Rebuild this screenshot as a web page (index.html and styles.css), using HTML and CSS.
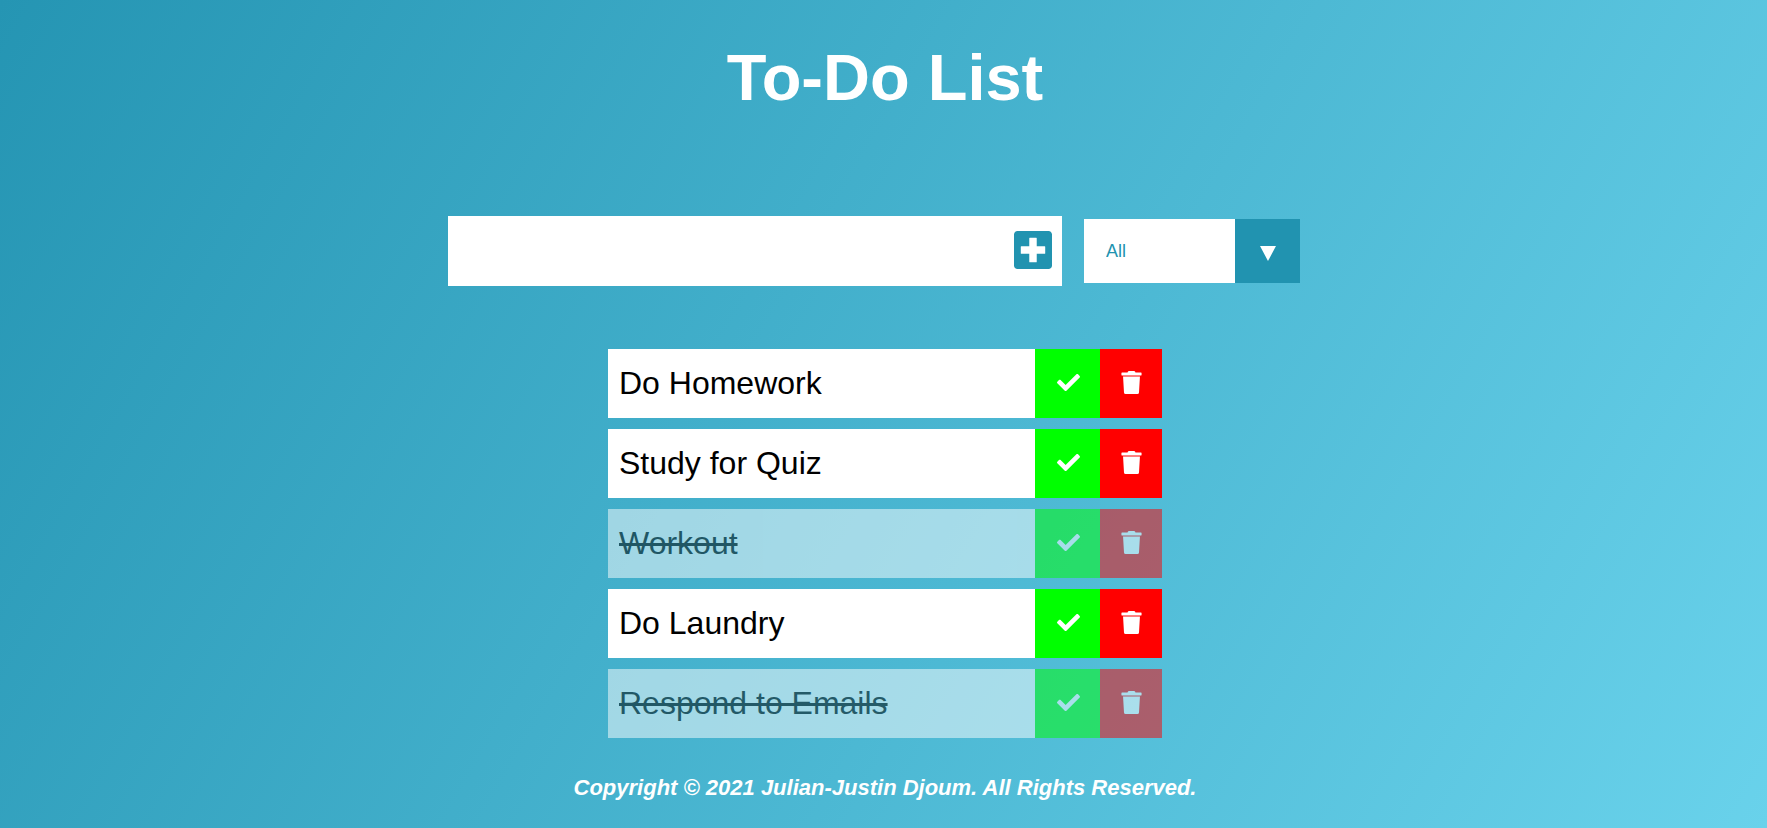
FILE: index.html
```html
<!DOCTYPE html>
<html lang="en">
<head>
<meta charset="utf-8">
<meta name="viewport" content="width=device-width, initial-scale=1">
<title>To-Do List</title>
<link rel="stylesheet" href="styles.css">
</head>
<body>
<svg class="sprite" aria-hidden="true">
  <symbol id="check" viewBox="0 0 512 512"><path d="M173.898 439.404l-166.400-166.400c-9.997-9.997-9.997-26.206 0-36.204l36.203-36.204c9.997-9.998 26.207-9.998 36.204 0L192 312.690 432.095 72.596c9.997-9.997 26.207-9.997 36.204 0l36.203 36.204c9.997 9.997 9.997 26.206 0 36.204l-294.400 294.401c-9.998 9.997-26.207 9.997-36.204-.001z"/></symbol>
  <symbol id="trash" viewBox="0 0 448 512"><path d="M438 32H312l-9.400-18.700A24 24 0 0 0 281.100 0H166.800a23.720 23.720 0 0 0-21.400 13.300L136 32H10A10 10 0 0 0 0 42v46a10 10 0 0 0 10 10h428a10 10 0 0 0 10-10V42a10 10 0 0 0-10-10zM57 478a36 36 0 0 0 36 34h262a36 36 0 0 0 36-34L412 122H36z"/></symbol>
  <symbol id="plus" viewBox="0 0 448 448"><path d="M406 0H42C18 0 0 18 0 42v364c0 24 18 42 42 42h364c24 0 42-18 42-42V42c0-24-18-42-42-42zm-38 262c0 4-2 6-6 6h-94v94c0 4-2 6-6 6h-76c-4 0-6-2-6-6v-94H86c-4 0-6-2-6-6v-76c0-4 2-6 6-6h94V86c0-4 2-6 6-6h76c4 0 6 2 6 6v94h94c4 0 6 2 6 6v76z"/></symbol>
</svg>
<header class="header"><h1>To-Do List</h1></header>
<main>
  <form class="form">
    <div class="entry">
      <input class="entry-input" type="text" aria-label="New task">
      <button class="entry-button" type="button" aria-label="Add task"><svg><use href="#plus"/></svg></button>
    </div>
    <div class="filter">
      <select class="filter-select" aria-label="Filter tasks">
        <option>All</option><option>Completed</option><option>Incomplete</option>
      </select>
      <span class="filter-arrow" aria-hidden="true"><svg viewBox="0 0 16 15"><path d="M0 0h16L8 15z"/></svg></span>
    </div>
  </form>
  <ul class="list">
    <li class="todo"><span class="todo-text">Do Homework</span><button class="done" type="button" aria-label="Complete"><svg><use href="#check"/></svg></button><button class="remove" type="button" aria-label="Delete"><svg><use href="#trash"/></svg></button></li>
    <li class="todo"><span class="todo-text">Study for Quiz</span><button class="done" type="button" aria-label="Complete"><svg><use href="#check"/></svg></button><button class="remove" type="button" aria-label="Delete"><svg><use href="#trash"/></svg></button></li>
    <li class="todo completed"><span class="todo-text">Workout</span><button class="done" type="button" aria-label="Complete"><svg><use href="#check"/></svg></button><button class="remove" type="button" aria-label="Delete"><svg><use href="#trash"/></svg></button></li>
    <li class="todo"><span class="todo-text">Do Laundry</span><button class="done" type="button" aria-label="Complete"><svg><use href="#check"/></svg></button><button class="remove" type="button" aria-label="Delete"><svg><use href="#trash"/></svg></button></li>
    <li class="todo completed"><span class="todo-text">Respond to Emails</span><button class="done" type="button" aria-label="Complete"><svg><use href="#check"/></svg></button><button class="remove" type="button" aria-label="Delete"><svg><use href="#trash"/></svg></button></li>
  </ul>
</main>
<footer class="footer">Copyright © 2021 Julian-Justin Djoum. All Rights Reserved.</footer>
</body>
</html>
```
FILE: styles.css
```css
* {
  box-sizing: border-box;
  margin: 0;
  padding: 0;
}

body {
  min-height: 100vh;
  padding-left: 3px;
  background: linear-gradient(120deg, #2595b3, #69d2eb);
  color: white;
  font-family: Arial, "Liberation Sans", sans-serif;
}

.sprite {
  display: none;
}

svg {
  display: block;
  fill: currentColor;
}

button {
  border: none;
  cursor: pointer;
}

.header {
  padding-top: 40px;
  text-align: center;
}

h1 {
  font-size: 65px;
  line-height: 76px;
}

.form {
  display: flex;
  align-items: center;
  justify-content: center;
  padding-top: 100px;
}

.entry {
  display: flex;
  width: 614px;
  max-width: 60%;
  margin-right: 22px;
  background: white;
}

.entry-input {
  flex: 1;
  min-width: 0;
  height: 70px;
  padding: 11px;
  border: none;
  outline: none;
  background: white;
  font: 32px Arial, "Liberation Sans", sans-serif;
}

.entry-button {
  padding: 0 10px 3px;
  background: white;
  color: #2193b0;
}

.entry-button svg {
  width: 38px;
  height: 38px;
}

.filter {
  display: grid;
  grid-template-columns: 151px 65px;
  margin-right: 22px;
}

.filter-select {
  grid-area: 1 / 1 / 2 / 3;
  height: 64px;
  padding: 0 22px;
  border: none;
  border-radius: 0;
  outline: none;
  appearance: none;
  background: white;
  color: #2193b0;
  font: 18px Arial, "Liberation Sans", sans-serif;
}

.filter-arrow {
  display: grid;
  grid-area: 1 / 2 / 2 / 3;
  place-items: center;
  padding-top: 5px;
  background: #2193b0;
  color: white;
  pointer-events: none;
}

.filter-arrow svg {
  width: 16px;
  height: 15px;
}

.list {
  display: grid;
  width: 554px;
  max-width: 100%;
  margin: 63px auto 0;
  gap: 11px;
  list-style: none;
}

.todo {
  display: flex;
  background: white;
  color: black;
}

.todo-text {
  flex: 1;
  padding: 0 11px;
  font-size: 32px;
  line-height: 69px;
}

.done,
.remove {
  display: grid;
  place-items: center;
  padding-bottom: 3px;
  color: white;
}

.done {
  width: 65px;
  padding-left: 2px;
  background: lime;
}

.remove {
  width: 62px;
  background: red;
}

.done svg {
  width: 23px;
  height: 23px;
}

.remove svg {
  width: 21px;
  height: 23px;
}

.completed {
  opacity: 0.5;
}

.completed .todo-text {
  text-decoration: line-through;
}

.footer {
  padding-top: 37px;
  font-size: 22px;
  font-style: italic;
  font-weight: bold;
  line-height: 26px;
  text-align: center;
}
```
